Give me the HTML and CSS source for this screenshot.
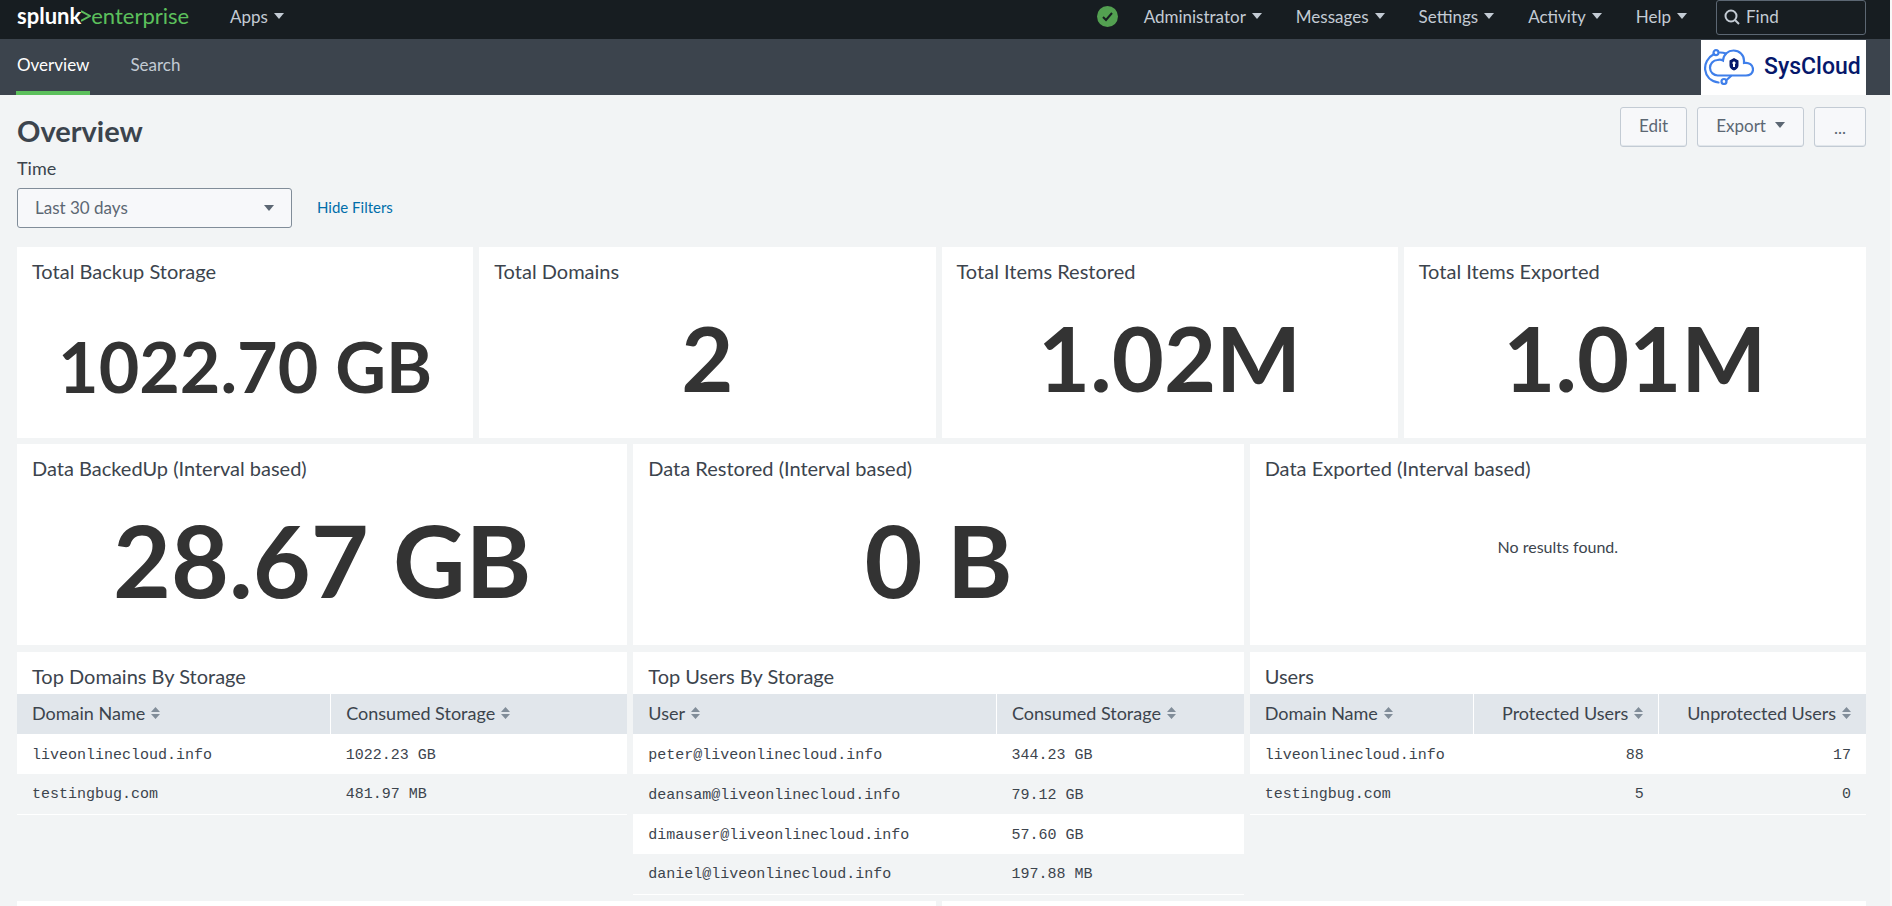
FILE: index.html
```html
<!DOCTYPE html>
<html lang="en">
<head>
    <meta charset="UTF-8">
    <meta name="viewport" content="width=device-width, initial-scale=1.0">
    <title>Overview | Splunk</title>
    <link rel="stylesheet" href="styles.css">
</head>
<body>
    <!-- Shared icons -->
    <svg class="sprite" aria-hidden="true">
        <symbol id="caret" viewBox="0 0 10 6"><path d="M0 0h10L5 6z"/></symbol>
        <symbol id="sort" viewBox="0 0 9 12"><path d="M4.500 0L9 5H0zM0 7h9L4.500 12z"/></symbol>
    </svg>

    <header class="topbar">
        <a class="brand" href="#"><span class="brand-name">splunk</span><svg class="brand-mark" viewBox="0 0 10 14"><path d="M0 2l9 5-9 5"/></svg><span class="brand-product">enterprise</span></a>
        <button class="nav-button apps">Apps <svg class="caret"><use href="#caret"/></svg></button>
        <nav class="topnav">
            <svg class="health" viewBox="0 0 21 21"><circle cx="10.500" cy="10.500" r="10.500"/><path d="M6 11l3 3 6-7"/></svg>
            <button class="nav-button">Administrator <svg class="caret"><use href="#caret"/></svg></button>
            <button class="nav-button">Messages <svg class="caret"><use href="#caret"/></svg></button>
            <button class="nav-button">Settings <svg class="caret"><use href="#caret"/></svg></button>
            <button class="nav-button">Activity <svg class="caret"><use href="#caret"/></svg></button>
            <button class="nav-button">Help <svg class="caret"><use href="#caret"/></svg></button>
        </nav>
        <label class="find">
            <svg class="find-icon" viewBox="0 0 16 16"><circle cx="7" cy="7" r="5.500"/><path d="M11 11l4 4"/></svg>
            <input class="find-input" type="text" placeholder="Find" aria-label="Find">
        </label>
    </header>

    <div class="appbar">
        <nav class="tabs">
            <a class="tab active" href="#">Overview</a>
            <a class="tab" href="#">Search</a>
        </nav>
        <a class="app-logo" href="#">
            <svg class="app-logo-mark" viewBox="0 0 50 36">
                <g fill="none" stroke="#3f7fea" stroke-width="2.200" stroke-linecap="round">
                    <path d="M14 26.500a6.500 6.500 0 0 1-.500-15.500c2-.600 4-.300 5.500.500C19.500 5.500 24 1.500 29.500 1.500c6 0 10.500 4.500 10.500 10v2.500c5-1 9 2 9 6.300s-3.500 6.200-7 6.200z"/>
                    <path d="M10 5C-3 12-2 31 14.500 33.500"/>
                    <path d="M16 3.500c2 0 4 .300 6 1"/>
                    <path d="M22 31.500l5-4.500"/>
                    <circle cx="12" cy="3.700" r="2.500"/>
                    <circle cx="20" cy="32.500" r="2.500"/>
                </g>
                <path fill="#06186b" fill-rule="evenodd" d="M30 9l4.500 2.500v5c0 2.500-2 4-4.500 5-2.500-1-4.500-2.500-4.500-5v-5zM30 12.500a1.500 1.500 0 0 0-1 2.700V18h2v-2.800a1.500 1.500 0 0 0-1-2.700z"/>
            </svg>
            <span class="app-logo-name">SysCloud</span>
        </a>
    </div>

    <main class="dashboard">
        <div class="dashboard-header">
            <h1>Overview</h1>
            <div class="actions">
                <button class="button">Edit</button>
                <button class="button">Export <svg class="caret"><use href="#caret"/></svg></button>
                <button class="button more">...</button>
            </div>
        </div>

        <label class="filter-label" for="time">Time</label>
        <div class="filters">
            <div class="select">
                <select id="time">
                    <option>Last 30 days</option>
                </select>
                <svg class="caret"><use href="#caret"/></svg>
            </div>
            <a class="hide-filters" href="#">Hide Filters</a>
        </div>

        <div class="row four totals">
            <section class="panel">
                <h2>Total Backup Storage</h2>
                <div class="value small">1022.70 GB</div>
            </section>
            <section class="panel">
                <h2>Total Domains</h2>
                <div class="value">2</div>
            </section>
            <section class="panel">
                <h2>Total Items Restored</h2>
                <div class="value">1.02M</div>
            </section>
            <section class="panel">
                <h2>Total Items Exported</h2>
                <div class="value">1.01M</div>
            </section>
        </div>

        <div class="row three intervals">
            <section class="panel">
                <h2>Data BackedUp (Interval based)</h2>
                <div class="value large">28.67 GB</div>
            </section>
            <section class="panel">
                <h2>Data Restored (Interval based)</h2>
                <div class="value large">0 B</div>
            </section>
            <section class="panel">
                <h2>Data Exported (Interval based)</h2>
                <p class="no-results">No results found.</p>
            </section>
        </div>

        <div class="row three tables">
            <section class="table-panel">
                <h2>Top Domains By Storage</h2>
                <table class="domains">
                    <thead>
                        <tr>
                            <th><button class="sort">Domain Name <svg><use href="#sort"/></svg></button></th>
                            <th><button class="sort">Consumed Storage <svg><use href="#sort"/></svg></button></th>
                        </tr>
                    </thead>
                    <tbody>
                        <tr><td>liveonlinecloud.info</td><td>1022.23 GB</td></tr>
                        <tr><td>testingbug.com</td><td>481.97 MB</td></tr>
                    </tbody>
                </table>
            </section>
            <section class="table-panel">
                <h2>Top Users By Storage</h2>
                <table class="top-users">
                    <thead>
                        <tr>
                            <th><button class="sort">User <svg><use href="#sort"/></svg></button></th>
                            <th><button class="sort">Consumed Storage <svg><use href="#sort"/></svg></button></th>
                        </tr>
                    </thead>
                    <tbody>
                        <tr><td>peter@liveonlinecloud.info</td><td>344.23 GB</td></tr>
                        <tr><td>deansam@liveonlinecloud.info</td><td>79.12 GB</td></tr>
                        <tr><td>dimauser@liveonlinecloud.info</td><td>57.60 GB</td></tr>
                        <tr><td>daniel@liveonlinecloud.info</td><td>197.88 MB</td></tr>
                    </tbody>
                </table>
            </section>
            <section class="table-panel">
                <h2>Users</h2>
                <table class="users">
                    <thead>
                        <tr>
                            <th><button class="sort">Domain Name <svg><use href="#sort"/></svg></button></th>
                            <th class="number"><button class="sort">Protected Users <svg><use href="#sort"/></svg></button></th>
                            <th class="number"><button class="sort">Unprotected Users <svg><use href="#sort"/></svg></button></th>
                        </tr>
                    </thead>
                    <tbody>
                        <tr><td>liveonlinecloud.info</td><td class="number">88</td><td class="number">17</td></tr>
                        <tr><td>testingbug.com</td><td class="number">5</td><td class="number">0</td></tr>
                    </tbody>
                </table>
            </section>
        </div>

        <div class="row two rest">
            <section class="panel"></section>
            <section class="panel"></section>
        </div>
    </main>
</body>
</html>
```

FILE: styles.css
```css
* { box-sizing: border-box; }
html { background-color: #f8f8f8; }
body {
    display: flex;
    flex-direction: column;
    min-height: 100vh;
    margin: 0 2px 0 0;
    font-family: Lato, "Liberation Sans", sans-serif;
    font-size: 17px;
    color: #3c444d;
    background-color: #f2f4f5;
}
a { text-decoration: none; }
button, input, select { font-family: inherit; font-size: inherit; }
button { cursor: pointer; }
h1, h2, p { margin: 0; }
.sprite { display: none; }
.caret { width: 10px; height: 6px; fill: currentColor; }

/* Top bar */
.topbar {
    display: flex;
    align-items: flex-start;
    height: 39px;
    padding: 0 24px 0 17px;
    background-color: #171d21;
}
.brand { display: flex; align-items: center; width: 213px; height: 31px; font-size: 22px; }
.brand-name { color: #fff; font-weight: bold; }
.brand-mark { width: 10px; height: 14px; fill: none; stroke: #5cc05c; stroke-width: 2; }
.brand-product { color: #5cc05c; }
.nav-button {
    display: flex;
    align-items: center;
    gap: 6px;
    height: 32px;
    padding: 0;
    border: none;
    background: none;
    color: #c3cbd4;
}
.topnav { display: flex; align-items: center; gap: 34px; margin-left: auto; margin-right: 29px; }
.health { width: 21px; height: 21px; margin-right: -8px; fill: #53a051; }
.health path { fill: none; stroke: #171d21; stroke-width: 2; }
.find {
    display: flex;
    align-items: center;
    gap: 6px;
    width: 150px;
    height: 35px;
    padding: 0 7px 2px;
    border: 1px solid #5c6773;
    border-radius: 3px;
}
.find-icon { flex: none; width: 16px; height: 16px; fill: none; stroke: #c3cbd4; stroke-width: 2; }
.find-input { width: 100%; padding: 0; border: none; outline: none; background: none; color: #c3cbd4; }
.find-input::placeholder { color: #c3cbd4; opacity: 1; }

/* App bar */
.appbar {
    display: flex;
    justify-content: space-between;
    align-items: flex-end;
    height: 56px;
    padding: 0 24px 0 16px;
    background-color: #3c444d;
}
.tabs { display: flex; gap: 39px; height: 100%; }
.tab { padding: 15px 1px 0; border-bottom: 4px solid transparent; color: #c3cbd4; }
.tab.active { border-color: #5cc05c; color: #fff; }
.app-logo {
    display: flex;
    align-items: center;
    gap: 10px;
    width: 165px;
    height: 55px;
    padding: 0 0 2px 3px;
    background-color: #fff;
}
.app-logo-mark { flex: none; width: 50px; height: 36px; }
.app-logo-name { font-family: Roboto, sans-serif; font-size: 23px; font-weight: 500; color: #06186b; }

/* Dashboard */
.dashboard { display: flex; flex: 1; flex-direction: column; padding: 12px 24px 0 17px; }
.dashboard-header { display: flex; justify-content: space-between; height: 51px; }
h1 { padding-top: 6px; font-size: 29px; font-weight: bold; line-height: 36px; }
.actions { display: flex; gap: 10px; }
.button {
    display: flex;
    align-items: center;
    gap: 9px;
    height: 40px;
    padding: 0 18px 4px;
    border: 1px solid #c3cbd4;
    border-radius: 3px;
    background-color: #f7f8fa;
    box-shadow: inset 0 -1px 0 #e1e6eb;
    color: #5c6773;
}
.more { padding: 0 19px; }
.filter-label { font-size: 18px; line-height: 20px; }
.filters { display: flex; align-items: center; gap: 25px; margin-top: 10px; }
.select { position: relative; width: 275px; }
.select select {
    width: 100%;
    height: 40px;
    padding: 0 40px 2px 17px;
    border: 1px solid #818d99;
    border-radius: 3px;
    appearance: none;
    background-color: #f7f8fa;
    color: #5c6773;
}
.select .caret { position: absolute; right: 18px; top: 17px; color: #5c6773; }
.hide-filters { padding-bottom: 2px; font-size: 15px; color: #006eaa; }

/* Panels */
.row { display: grid; }
.row > * { margin-right: 6px; }
.row > :last-child { margin-right: 0; }
.two { grid-template-columns: repeat(2, 1fr); }
.three { grid-template-columns: repeat(3, 1fr); }
.four { grid-template-columns: repeat(4, 1fr); }
.totals { margin-top: 19px; }
.intervals { margin-top: 6px; }
.tables { margin-top: 7px; }
.rest { flex: 1; margin-top: 6px; }
.panel { background-color: #fff; }
h2 { padding: 12px 15px 6px; font-size: 20px; font-weight: normal; line-height: 24px; }
.value {
    height: 149px;
    font-size: 90px;
    font-weight: bold;
    line-height: 137px;
    text-align: center;
    color: #333;
}
.value.small { font-size: 70px; line-height: 155px; }
.value.large { height: 159px; font-size: 100px; line-height: 146px; }
.no-results { padding-top: 49px; font-size: 16px; line-height: 24px; text-align: center; }

/* Tables */
.table-panel h2 { background-color: #fff; }
table { width: 100%; border-collapse: collapse; table-layout: fixed; border-bottom: 1px solid #fff; }
th, td { height: 40px; padding: 0 15px; text-align: left; }
th { padding-bottom: 2px; background-color: #e1e6eb; font-size: 18px; font-weight: normal; }
th + th { border-left: 1px solid #fff; }
td { padding-top: 2px; font-family: "Liberation Mono", monospace; font-size: 15px; }
tbody tr:nth-child(odd) { background-color: #fff; }
th.number, td.number { text-align: right; }
.sort { display: inline-flex; align-items: center; gap: 6px; padding: 0; border: none; background: none; color: inherit; }
.sort svg { width: 9px; height: 12px; fill: #818d99; }
.domains th:first-child { width: 51.4%; }
.top-users th:first-child { width: 59.5%; }
.users th:first-child { width: 36.3%; }
.users th:nth-child(2) { width: 30.1%; }
```
